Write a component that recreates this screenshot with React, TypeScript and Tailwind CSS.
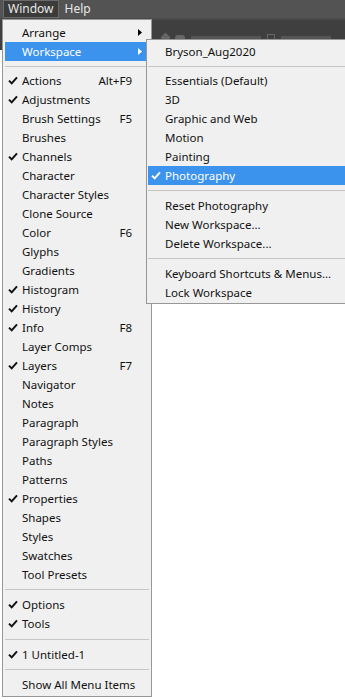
import React from 'react';

type Entry =
  | { kind: 'item'; label: string; checked?: boolean; shortcut?: string; sub?: boolean; active?: boolean }
  | { kind: 'sep'; h?: string };

const mainMenu: Entry[] = [
  { kind: 'item', label: 'Arrange', sub: true },
  { kind: 'item', label: 'Workspace', sub: true, active: true },
  { kind: 'sep', h: 'h-[10px]' },
  { kind: 'item', label: 'Actions', checked: true, shortcut: 'Alt+F9' },
  { kind: 'item', label: 'Adjustments', checked: true },
  { kind: 'item', label: 'Brush Settings', shortcut: 'F5' },
  { kind: 'item', label: 'Brushes' },
  { kind: 'item', label: 'Channels', checked: true },
  { kind: 'item', label: 'Character' },
  { kind: 'item', label: 'Character Styles' },
  { kind: 'item', label: 'Clone Source' },
  { kind: 'item', label: 'Color', shortcut: 'F6' },
  { kind: 'item', label: 'Glyphs' },
  { kind: 'item', label: 'Gradients' },
  { kind: 'item', label: 'Histogram', checked: true },
  { kind: 'item', label: 'History', checked: true },
  { kind: 'item', label: 'Info', checked: true, shortcut: 'F8' },
  { kind: 'item', label: 'Layer Comps' },
  { kind: 'item', label: 'Layers', checked: true, shortcut: 'F7' },
  { kind: 'item', label: 'Navigator' },
  { kind: 'item', label: 'Notes' },
  { kind: 'item', label: 'Paragraph' },
  { kind: 'item', label: 'Paragraph Styles' },
  { kind: 'item', label: 'Paths' },
  { kind: 'item', label: 'Patterns' },
  { kind: 'item', label: 'Properties', checked: true },
  { kind: 'item', label: 'Shapes' },
  { kind: 'item', label: 'Styles' },
  { kind: 'item', label: 'Swatches' },
  { kind: 'item', label: 'Tool Presets' },
  { kind: 'sep' },
  { kind: 'item', label: 'Options', checked: true },
  { kind: 'item', label: 'Tools', checked: true },
  { kind: 'sep', h: 'h-[12px]' },
  { kind: 'item', label: '1 Untitled-1', checked: true },
  { kind: 'sep' },
  { kind: 'item', label: 'Show All Menu Items' },
];

const workspaceMenu: Entry[] = [
  { kind: 'item', label: 'Bryson_Aug2020' },
  { kind: 'sep', h: 'h-[10px]' },
  { kind: 'item', label: 'Essentials (Default)' },
  { kind: 'item', label: '3D' },
  { kind: 'item', label: 'Graphic and Web' },
  { kind: 'item', label: 'Motion' },
  { kind: 'item', label: 'Painting' },
  { kind: 'item', label: 'Photography', checked: true, active: true },
  { kind: 'sep' },
  { kind: 'item', label: 'Reset Photography' },
  { kind: 'item', label: 'New Workspace...' },
  { kind: 'item', label: 'Delete Workspace...' },
  { kind: 'sep' },
  { kind: 'item', label: 'Keyboard Shortcuts & Menus...' },
  { kind: 'item', label: 'Lock Workspace' },
];

function Check({ white }: { white?: boolean }) {
  return (
    <svg width="10" height="9" viewBox="0 0 10 9" className="shrink-0">
      <path d="M1 4.6 L3.7 7.4 L9 1.4" fill="none" stroke={white ? '#ffffff' : '#111111'} strokeWidth="2" />
    </svg>
  );
}

function Arrow({ white }: { white?: boolean }) {
  return (
    <svg width="4" height="7" viewBox="0 0 4 7" className="shrink-0">
      <path d="M0 0 L4 3.5 L0 7 Z" fill={white ? '#ffffff' : '#000000'} />
    </svg>
  );
}

function MenuList({ entries }: { entries: Entry[] }) {
  return (
    <>
      {entries.map((e, i) =>
        e.kind === 'sep' ? (
          <div key={i} className={`${e.h ?? 'h-[11px]'} flex items-center`}>
            <div className="h-px w-full bg-[#c6c6c6]" />
          </div>
        ) : (
          <div
            key={i}
            className={`h-[19px] flex items-center ${e.active ? 'bg-[#3c93ee] text-white' : 'text-[#111]'}`}
          >
            <div className="w-[17px] flex justify-start pl-[3px]">{e.checked && <Check white={e.active} />}</div>
            <span className="flex-1 whitespace-nowrap">{e.label}</span>
            {e.shortcut && <span className="whitespace-nowrap mr-[17px]">{e.shortcut}</span>}
            {e.sub && (
              <div className="mr-[7px] flex">
                <Arrow white={e.active} />
              </div>
            )}
          </div>
        )
      )}
    </>
  );
}

export default function App() {
  return (
    <div
      className="relative w-[345px] h-[700px] bg-white overflow-hidden text-[11.5px] leading-none"
      style={{ fontFamily: '"Noto Sans", "Open Sans", sans-serif' }}
    >
      {/* menu bar */}
      <div className="h-[18px] bg-[#535353] flex items-stretch pl-[3px] gap-[1px] text-[#e8e8e8] text-[12px]">
        <div className="px-[4px] flex items-center bg-[#3b3b3b] border border-[#6a6a6a]">Window</div>
        <div className="px-[5px] flex items-center">Help</div>
      </div>
      {/* options bar behind menus */}
      <div className="h-[2px] bg-[#4a4a4a]" />
      <div className="h-[30px] bg-[#3f3f3f] flex items-start pt-[12px] gap-[6px] pl-[162px]">
        <div className="w-[7px] h-[7px] bg-[#666] rotate-45 mt-[2px]" />
        <div className="w-[10px] h-[6px] rounded-sm bg-[#666] mt-[3px]" />
        <div className="w-[70px] h-[6px] bg-[#555] mt-[4px]" />
        <div className="w-[8px] h-[8px] border border-[#666] mt-[2px]" />
        <div className="w-[50px] h-[6px] bg-[#555] mt-[4px]" />
      </div>

      {/* Window menu */}
      <div className="absolute left-[2px] top-[19px] w-[150px] bg-[#f0f0f0] border border-[#979797] pt-[3px] pb-[2px] px-[2px]">
        <MenuList entries={mainMenu} />
      </div>

      {/* Workspace submenu */}
      <div className="absolute left-[146px] top-[39px] w-[205px] bg-[#f0f0f0] border border-[#979797] pt-[2px] pb-[1px] pl-[1px] pr-[2px]">
        <MenuList entries={workspaceMenu} />
      </div>
    </div>
  );
}
